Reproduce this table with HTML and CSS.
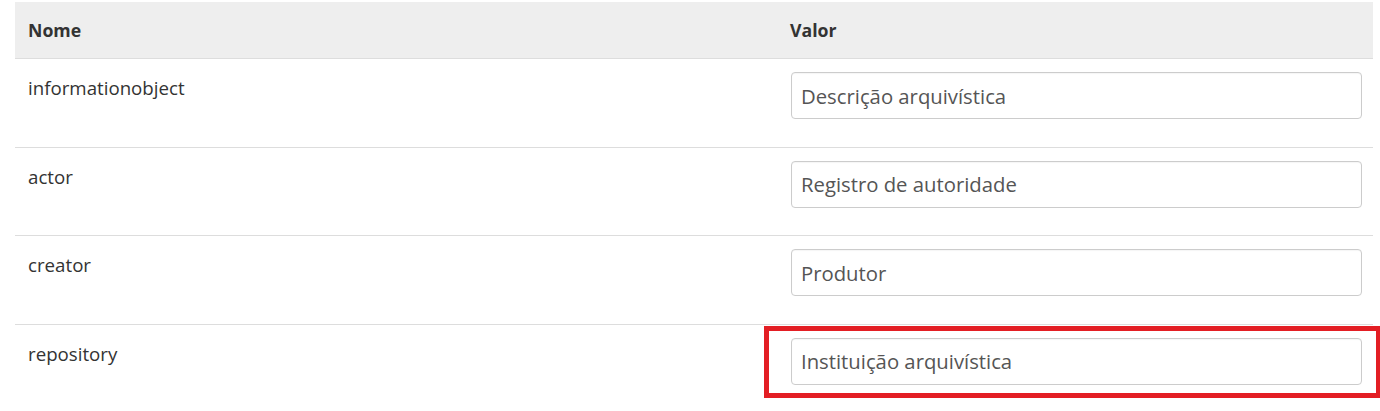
FILE: index.html
```html
<!DOCTYPE html>
<html lang="pt">
<head>
<meta charset="utf-8">
<link rel="stylesheet" href="styles.css">
</head>
<body>
<table class="settings">
  <thead>
    <tr><th class="col-name">Nome</th><th class="col-value">Valor</th></tr>
  </thead>
  <tbody>
    <tr><td class="name">informationobject</td><td class="value"><input class="field" type="text" value="Descrição arquivística"></td></tr>
    <tr><td class="name">actor</td><td class="value"><input class="field" type="text" value="Registro de autoridade"></td></tr>
    <tr><td class="name">creator</td><td class="value"><input class="field" type="text" value="Produtor"></td></tr>
    <tr><td class="name">repository</td><td class="value highlighted"><input class="field" type="text" value="Instituição arquivística"><span class="mark"></span></td></tr>
  </tbody>
</table>
</body>
</html>
```

FILE: styles.css
```css
html, body {
  margin: 0;
  padding: 0;
  background: #fff;
}
body {
  font-family: "Open Sans", "Liberation Sans", sans-serif;
  color: #333;
  font-size: 18px;
}
.settings {
  margin: 2px 0 0 15px;
  width: 1358px;
  border-collapse: collapse;
  table-layout: fixed;
}
.settings th {
  background: #eeeeee;
  height: 56px;
  padding: 0 13px;
  text-align: left;
  font-weight: 700;
  font-size: 17.7px;
  color: #333;
  border-bottom: 1px solid #dddddd;
}
.col-name { width: 736px; }
.settings td {
  vertical-align: top;
  border-top: 1px solid #dddddd;
  height: 88.6px;
  box-sizing: border-box;
}
.settings tbody tr:first-child td { border-top: none; }
.name {
  padding: 17px 13px 0;
  line-height: 24px;
  font-size: 18.7px;
  color: #333;
}
.value {
  padding: 13px 11px 0 14px;
  position: relative;
}
.field {
  display: block;
  box-sizing: border-box;
  width: 571px;
  height: 47px;
  padding: 0 9px;
  border: 1px solid #cccccc;
  border-radius: 4px;
  font-family: "Open Sans", "Liberation Sans", sans-serif;
  font-size: 20.3px;
  color: #555;
  background: #fff;
  box-shadow: inset 0 1px 1px rgba(0,0,0,0.04);
}
.mark {
  position: absolute;
  left: -13px;
  top: 1px;
  width: 617px;
  height: 72px;
  box-sizing: border-box;
  border: 5px solid #e31e24;
  pointer-events: none;
}
```
